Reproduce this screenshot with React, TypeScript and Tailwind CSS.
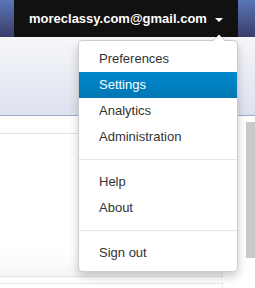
import React from 'react';

const items = ['Preferences', 'Settings', 'Analytics', 'Administration'];

function MenuItem({ label, active }: { label: string; active?: boolean }) {
  return (
    <li>
      <a
        className={
          active
            ? 'block px-[20px] py-[3px] leading-[20px] text-white bg-gradient-to-b from-[#0088cc] to-[#0077b3]'
            : 'block px-[20px] py-[3px] leading-[20px] text-[#333333]'
        }
      >
        {label}
      </a>
    </li>
  );
}

export default function App() {
  return (
    <main
      className="relative w-[255px] h-[288px] overflow-hidden bg-white"
      style={{ fontFamily: '"Liberation Sans", Arial, sans-serif' }}
    >
      {/* navbar */}
      <header className="flex h-[37px]">
        <div className="w-[14px] bg-gradient-to-b from-[#5a77b7] to-[#3a3d6b]" />
        <div className="flex items-center pl-[15px] pr-[15px] bg-[#111111] text-white font-bold text-[13px]">
          <span>moreclassy.com@gmail.com</span>
          <span className="ml-[8px] mt-[2px] w-0 h-0 border-l-[4px] border-r-[4px] border-t-[4px] border-l-transparent border-r-transparent border-t-white" />
        </div>
        <div className="flex-1 bg-gradient-to-b from-[#5a77b7] to-[#3a3d6b]" />
      </header>

      {/* sub bar */}
      <div className="h-[79px] bg-gradient-to-b from-[#f6f7fa] to-[#dde1ee] border-b border-[#a4a9d4]" />

      {/* content */}
      <div className="flex">
        <div className="w-[223px] flex flex-col">
          <div className="mt-[17px] h-[144px] border-t border-r border-b border-[#e3e3e3] flex flex-col">
            <div className="flex-1" />
            <div className="h-[26px] bg-gradient-to-b from-white to-[#f3f5f8]" />
          </div>
          <div className="mt-[6px] h-[20px] border-t border-r border-[#e6e6e6]" />
        </div>
        <div className="flex-1 flex justify-end">
          <div className="mt-[6px] w-[9px] h-[136px] bg-[#c9c9c9]" />
        </div>
      </div>

      {/* dropdown menu */}
      <div className="absolute left-[78px] top-[40px] w-[160px]">
        <svg className="absolute left-[133px] top-[-8px]" width="16" height="9" viewBox="0 0 16 9">
          <path d="M1 9 L8 1.5 L15 9 Z" fill="rgba(0,0,0,0.2)" />
          <path d="M2 9 L8 2.5 L14 9 Z" fill="#ffffff" />
        </svg>
        <ul className="bg-white border border-black/20 rounded-[5px] shadow-[0_5px_10px_rgba(0,0,0,0.2)] py-[5px] text-[13px]">
          {items.map((label) => (
            <MenuItem key={label} label={label} active={label === 'Settings'} />
          ))}
          <li className="my-[9px] h-px bg-[#e5e5e5]" />
          <MenuItem label="Help" />
          <MenuItem label="About" />
          <li className="my-[9px] h-px bg-[#e5e5e5]" />
          <MenuItem label="Sign out" />
        </ul>
      </div>
    </main>
  );
}
